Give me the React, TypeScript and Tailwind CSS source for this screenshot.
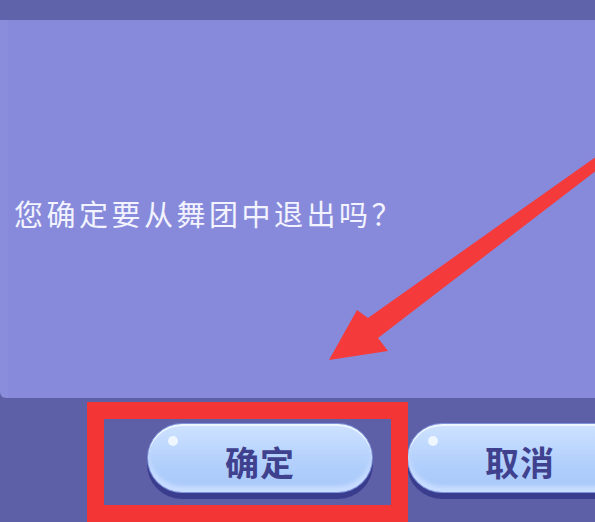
import React from "react";

const cjk = { fontFamily: '"Noto Sans CJK SC", "Noto Sans", sans-serif' };

// glossy pill button used in the dialog footer
const PillButton = ({ label }: { label: string }) => (
  <button
    className="relative h-[70px] w-[226px] shrink-0 rounded-full border border-[#7f93dc] bg-gradient-to-b from-[#cfe3ff] via-[#b5d2fd] to-[#a6c6f9] shadow-[0_6px_0_#3a3c8e,inset_0_2px_0_#eef6ff,inset_0_-6px_4px_#c9ddff]"
    style={cjk}
  >
    <span className="absolute left-[20px] top-[12px] h-[10px] w-[10px] rounded-full bg-[#eef6ff]" />
    <span className="relative top-[3px] text-[34px] font-bold tracking-[1px] text-[#3f418f]">{label}</span>
  </button>
);

export default function App() {
  return (
    <div className="relative h-[522px] w-[595px] overflow-hidden bg-[#5d60a6]" style={cjk}>
      {/* top strip */}
      <div className="h-[20px] bg-[#5f63aa]" />

      {/* dialog body */}
      <div className="flex h-[378px] items-center rounded-bl-[6px] border-l-[8px] border-[#8a8ddc] bg-[#878ada] pl-[6px] pt-[8px]">
        <p className="text-[29px] leading-none tracking-[3.5px] text-[#f2f3ff]">您确定要从舞团中退出吗？</p>
      </div>

      {/* footer buttons */}
      <div className="flex gap-[34px] pl-[147px] pt-[25px]">
        <PillButton label="确定" />
        <PillButton label="取消" />
      </div>

      {/* highlight box around the confirm button */}
      <div className="pointer-events-none absolute left-[87px] top-[402px] h-[120px] w-[321px] border-[17px] border-[#f33535]" />

      {/* pointer arrow */}
      <svg className="pointer-events-none absolute left-0 top-0" width="595" height="522" viewBox="0 0 595 522">
        <polygon
          points="597,156 368,318 357,310 329,360 388,351 378,338 597,170"
          fill="#f43a3a"
        />
      </svg>
    </div>
  );
}
